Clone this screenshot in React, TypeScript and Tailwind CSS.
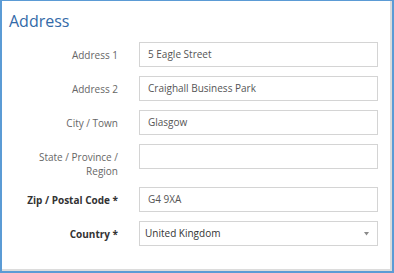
import React from 'react';

interface Field {
  label: React.ReactNode;
  key: string;
  value: string;
  required?: boolean;
  select?: boolean;
}

const fields: Field[] = [
  { key: 'a1', label: 'Address 1', value: '5 Eagle Street' },
  { key: 'a2', label: 'Address 2', value: 'Craighall Business Park' },
  { key: 'city', label: 'City / Town', value: 'Glasgow' },
  {
    key: 'state',
    label: (
      <>
        State / Province /
        <br />
        Region
      </>
    ),
    value: '',
  },
  { key: 'zip', label: 'Zip / Postal Code *', value: 'G4 9XA', required: true },
  { key: 'country', label: 'Country *', value: 'United Kingdom', required: true, select: true },
];

export default function App() {
  return (
    <div className="w-[394px] h-[273px] border-l-2 border-t border-r-2 border-b-2 border-[#5b9bd5] bg-white font-['Open_Sans',sans-serif]">
      <div className="h-full border-r-2 border-b-2 border-[#dcdcdc] pt-[10px]">
        <h2 className="pl-[7px] text-[16px] leading-[20px] text-[#336aa8]">Address</h2>
        <div className="mt-[11px] flex flex-col gap-[9px]">
          {fields.map((f) => (
            <div key={f.key} className="grid grid-cols-[116px_239px] gap-x-[21px] items-start">
              <label
                className={`pt-[6px] text-right text-[10px] leading-[14px] ${
                  f.required ? 'font-bold text-[#333]' : 'text-[#666]'
                }`}
              >
                {f.label}
              </label>
              {f.select ? (
                <div className="flex h-[25px] items-center justify-between border border-[#d4d4d4] pl-[5px] pr-[8px] text-[10px] text-[#333]">
                  <span>{f.value}</span>
                  <svg width="5" height="4" viewBox="0 0 5 4" className="mt-[1px]">
                    <path d="M0 0H5L2.5 3.5Z" fill="#8a8a8a" />
                  </svg>
                </div>
              ) : (
                <div className="flex h-[25px] items-center border border-[#d4d4d4] pl-[8px] text-[10px] text-[#555]">
                  {f.value}
                </div>
              )}
            </div>
          ))}
        </div>
      </div>
    </div>
  );
}
